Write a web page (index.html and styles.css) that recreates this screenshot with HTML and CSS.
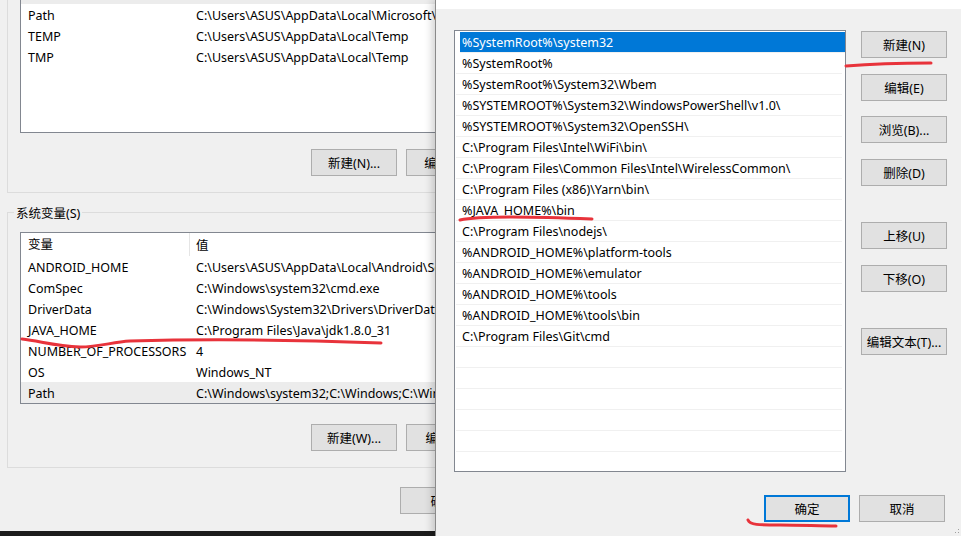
FILE: index.html
```html
<!DOCTYPE html>
<html lang="zh-CN">
<head>
    <meta charset="UTF-8">
    <title>编辑环境变量</title>
    <link rel="stylesheet" href="styles.css">
</head>
<body>
    <div class="desktop">
        <div class="env-window">
            <div class="group">
                <span class="group-title">ASUS 的用户变量(U)</span>
                <div class="var-list user-list">
                    <div class="var-row var-head"><span>变量</span><span>值</span></div>
                    <div class="var-row is-selected"><span>OneDrive</span><span>C:\Users\ASUS\OneDrive</span></div>
                    <div class="var-row"><span>Path</span><span>C:\Users\ASUS\AppData\Local\Microsoft\WindowsApps;</span></div>
                    <div class="var-row"><span>TEMP</span><span>C:\Users\ASUS\AppData\Local\Temp</span></div>
                    <div class="var-row"><span>TMP</span><span>C:\Users\ASUS\AppData\Local\Temp</span></div>
                </div>
                <div class="btn-row">
                    <button class="btn">新建(N)...</button>
                    <button class="btn">编辑(E)...</button>
                    <button class="btn">删除(D)</button>
                </div>
            </div>

            <div class="group group-system">
                <span class="group-title">系统变量(S)</span>
                <div class="var-list">
                    <div class="var-row var-head"><span>变量</span><span>值</span></div>
                    <div class="var-row"><span>ANDROID_HOME</span><span>C:\Users\ASUS\AppData\Local\Android\Sdk</span></div>
                    <div class="var-row"><span>ComSpec</span><span>C:\Windows\system32\cmd.exe</span></div>
                    <div class="var-row"><span>DriverData</span><span>C:\Windows\System32\Drivers\DriverData</span></div>
                    <div class="var-row"><span>JAVA_HOME</span><span>C:\Program Files\Java\jdk1.8.0_31</span></div>
                    <div class="var-row"><span>NUMBER_OF_PROCESSORS</span><span>4</span></div>
                    <div class="var-row"><span>OS</span><span>Windows_NT</span></div>
                    <div class="var-row is-selected"><span>Path</span><span>C:\Windows\system32;C:\Windows;C:\Windows\System32\Wbem;</span></div>
                </div>
                <div class="btn-row">
                    <button class="btn">新建(W)...</button>
                    <button class="btn">编辑(I)...</button>
                    <button class="btn">删除(L)</button>
                </div>
            </div>

            <div class="window-footer">
                <button class="btn">确定</button>
                <button class="btn">取消</button>
            </div>
        </div>

        <div class="taskbar"></div>

        <div class="edit-dialog">
            <div class="dialog-titlebar"></div>
            <div class="dialog-body">
                <div class="path-list">
                    <div class="path-row is-selected">%SystemRoot%\system32</div>
                    <div class="path-row">%SystemRoot%</div>
                    <div class="path-row">%SystemRoot%\System32\Wbem</div>
                    <div class="path-row">%SYSTEMROOT%\System32\WindowsPowerShell\v1.0\</div>
                    <div class="path-row">%SYSTEMROOT%\System32\OpenSSH\</div>
                    <div class="path-row">C:\Program Files\Intel\WiFi\bin\</div>
                    <div class="path-row">C:\Program Files\Common Files\Intel\WirelessCommon\</div>
                    <div class="path-row">C:\Program Files (x86)\Yarn\bin\</div>
                    <div class="path-row">%JAVA_HOME%\bin</div>
                    <div class="path-row">C:\Program Files\nodejs\</div>
                    <div class="path-row">%ANDROID_HOME%\platform-tools</div>
                    <div class="path-row">%ANDROID_HOME%\emulator</div>
                    <div class="path-row">%ANDROID_HOME%\tools</div>
                    <div class="path-row">%ANDROID_HOME%\tools\bin</div>
                    <div class="path-row">C:\Program Files\Git\cmd</div>
                    <div class="path-row"></div>
                    <div class="path-row"></div>
                    <div class="path-row"></div>
                    <div class="path-row"></div>
                    <div class="path-row"></div>
                    <div class="path-row"></div>
                </div>
                <div class="side-buttons">
                    <button class="btn">新建(N)</button>
                    <button class="btn">编辑(E)</button>
                    <button class="btn">浏览(B)...</button>
                    <button class="btn">删除(D)</button>
                    <button class="btn spaced">上移(U)</button>
                    <button class="btn">下移(O)</button>
                    <button class="btn spaced">编辑文本(T)...</button>
                </div>
            </div>
            <div class="dialog-footer">
                <button class="btn btn-default">确定</button>
                <button class="btn">取消</button>
            </div>
            <svg class="grip" width="8" height="8" viewBox="0 0 8 8">
                <rect x="6" y="2" width="1" height="1" fill="#a0a0a0"/>
                <rect x="6" y="5" width="1" height="1" fill="#a0a0a0"/>
                <rect x="3" y="5" width="1" height="1" fill="#a0a0a0"/>
            </svg>
        </div>

        <!-- red pen marks drawn over the screenshot -->
        <svg class="marks" viewBox="0 0 961 536">
            <path d="M22 339 C40 341 55 346 80 347 C100 347 112 342 130 341 C200 339 300 340 381 343" />
            <path d="M460 220 C478 216 520 216 592 219" />
            <path d="M846 66 C870 64 900 63 931 63" />
            <path d="M748 520 C750 525 758 525 780 525 C800 525 820 526 836 526" />
        </svg>
    </div>
</body>
</html>
```

FILE: styles.css
```css
body {
    margin: 0;
    font-family: "Noto Sans", "Noto Sans CJK SC", sans-serif;
    font-size: 12.5px;
    color: #000;
}

.desktop {
    position: relative;
    width: 961px;
    height: 536px;
    overflow: hidden;
    background: #f0f0f0;
}

/* back window: environment variables */
.env-window {
    position: absolute;
    left: 0;
    top: -60px;
    width: 607px;
    height: 591px;
    background: #f0f0f0;
}

.group {
    margin: 0 7px;
    padding: 0 12px 16px;
    border: 1px solid #dcdcdc;
}

.group-system {
    margin-top: 19px;
}

.group-title {
    display: table;
    margin: -7px 0 0 -6px;
    padding: 0 2px;
    line-height: 16px;
    background: #f0f0f0;
}

.var-list {
    margin-top: 10px;
    height: 172px;
    box-sizing: border-box;
    border: 1px solid #828790;
    background: #fff;
    overflow: hidden;
}

.user-list {
    margin-top: 9px;
    height: 174px;
}

.var-row {
    display: grid;
    grid-template-columns: 169px 1fr;
    height: 21px;
    box-sizing: border-box;
    padding-top: 2px;
    align-items: center;
    white-space: nowrap;
}

.var-row span {
    overflow: hidden;
}

.var-row span:first-child {
    padding-left: 7px;
}

.var-row span:last-child {
    padding-left: 6px;
}

.var-head {
    height: 23px;
    padding-top: 0;
}

.var-head span:first-child {
    height: 23px;
    line-height: 23px;
    border-right: 1px solid #e5e5e5;
}

.var-row.is-selected {
    background: #ececec;
}

.btn-row {
    display: flex;
    justify-content: flex-end;
    gap: 9px;
    margin-top: 16px;
}

.group-system .btn-row {
    margin-top: 20px;
}

.window-footer {
    display: flex;
    justify-content: flex-end;
    gap: 9px;
    margin-top: 19px;
    padding-right: 26px;
}

.btn {
    width: 86px;
    height: 27px;
    padding: 0;
    box-sizing: border-box;
    border: 1px solid #adadad;
    background: #e1e1e1;
    font: inherit;
    color: #000;
    white-space: nowrap;
}

.btn-default {
    border: 2px solid #0078d7;
}

.taskbar {
    position: absolute;
    left: 0;
    right: 0;
    bottom: 0;
    height: 5px;
    background: #1c1c1c;
}

/* front dialog: edit path */
.edit-dialog {
    position: absolute;
    left: 435px;
    top: 0;
    width: 526px;
    height: 536px;
    box-sizing: border-box;
    background: #f0f0f0;
    border-left: 1px solid #8a8a8a;
    box-shadow: -3px 0 8px rgba(0, 0, 0, 0.18);
}

.dialog-titlebar {
    height: 9px;
    background: #fff;
}

.dialog-body {
    display: flex;
    padding: 21px 14px 0 18px;
}

.path-list {
    width: 392px;
    height: 442px;
    box-sizing: border-box;
    padding-top: 1px;
    border: 1px solid #828790;
    background: #fff;
    overflow: hidden;
}

.path-row {
    height: 20px;
    line-height: 22px;
    margin: 0 3px 0 1px;
    padding-left: 6px;
    border-bottom: 1px solid #f0f0f0;
    white-space: nowrap;
    overflow: hidden;
}

.path-row.is-selected {
    margin: 0 0 0 5px;
    padding-left: 2px;
    background: #0078d7;
    color: #fff;
}

.side-buttons {
    display: flex;
    flex-direction: column;
    gap: 15.5px;
    margin-left: 15px;
    padding-top: 1px;
}

.side-buttons .spaced {
    margin-top: 21px;
}

.dialog-footer {
    display: flex;
    justify-content: flex-end;
    gap: 9px;
    margin-top: 23px;
    padding-right: 16px;
}

.grip {
    position: absolute;
    right: 1px;
    bottom: 1px;
}

.marks {
    position: absolute;
    left: 0;
    top: 0;
    width: 961px;
    height: 536px;
    pointer-events: none;
}

.marks path {
    fill: none;
    stroke: #e8333b;
    stroke-width: 3;
    stroke-linecap: round;
}
```
